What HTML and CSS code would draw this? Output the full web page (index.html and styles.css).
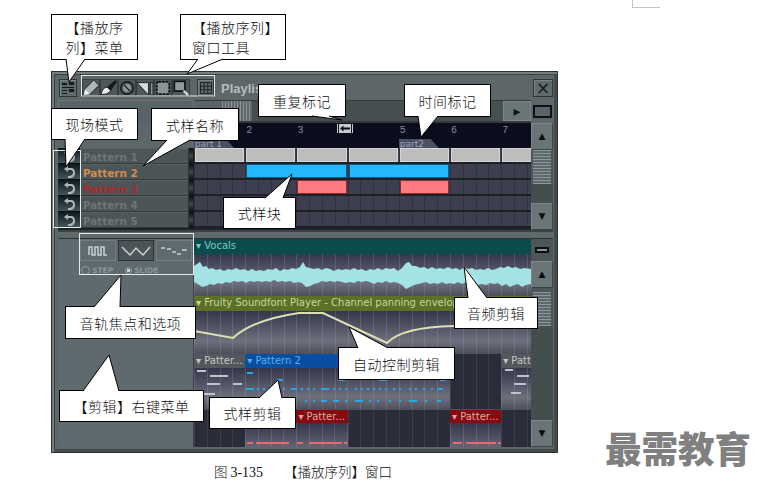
FILE: index.html
```html
<!DOCTYPE html>
<html lang="zh">
<head>
<meta charset="utf-8">
<title>播放序列窗口</title>
<link rel="stylesheet" href="styles.css">
</head>
<body>
<svg class="defs" width="0" height="0">
  <symbol id="undo" viewBox="0 0 18 14"><path d="M8 1 L4 4 L8 7 V5 H11 Q13 5 13 8 Q13 10 10 11 H8 V13 H11 Q15 12 15 8 Q15 3 11 3 H8 Z" fill="#a9b5b9"/></symbol>
</svg>
<main class="page">
  <i class="corner"></i>
  <section class="win">
    <header class="titlebar">
      <button class="btn menu-btn"><svg width="14" height="14" viewBox="0 0 14 14"><path d="M1 2h5v2H1zM8 1h5v3H8zM1 6h12v1H1zM1 9h5v1H1zM8 8h5v3H8zM1 12h5v1H1z" fill="#15191a"/></svg></button>
      <div class="tools">
        <span class="tool"><svg width="18" height="18" viewBox="0 0 18 18"><path d="M1 17 L2 10 L12 0 L18 6 L8 16Z" fill="#aeb6b8" stroke="#101314"/><path d="M1 17 L2 10 L8 16Z" fill="#f2f2f2"/></svg></span>
        <span class="tool"><svg width="18" height="18" viewBox="0 0 18 18"><path d="M0 16 Q2 8 7 8 L11 12 Q7 17 0 16Z" fill="#e8ecec" stroke="#0d1011"/><path d="M7 8 L16 0 L18 2 L11 12Z" fill="#15191a"/></svg></span>
        <span class="tool"><svg width="18" height="18" viewBox="0 0 18 18"><circle cx="9" cy="9" r="7" fill="none" stroke="#14181a" stroke-width="1.6"/><circle cx="9" cy="9" r="4.5" fill="#8e9799"/><path d="M5.5 5.5 L12.5 12.5" stroke="#14181a" stroke-width="1.5"/></svg></span>
        <span class="tool"><svg width="18" height="18" viewBox="0 0 18 18"><path d="M0 3 H13 V17 Z" fill="#d5dada" stroke="#14181a"/><path d="M15 3 H18 V17 H15Z" fill="#8e9799" stroke="#14181a"/></svg></span>
        <span class="tool"><svg width="18" height="18" viewBox="0 0 18 18"><rect x="2" y="2" width="14" height="14" rx="2" fill="#8a9395" stroke="#0f1213" stroke-width="2" stroke-dasharray="3 1"/></svg></span>
        <span class="tool"><svg width="18" height="18" viewBox="0 0 18 18"><rect x="1.5" y="1.5" width="12" height="11" fill="#8f9a9c" stroke="#10141a" stroke-width="2"/><path d="M12 12 L17 17" stroke="#d5dada" stroke-width="2.5"/></svg></span>
      </div>
      <button class="btn grid-btn"><svg width="12" height="12" viewBox="0 0 12 12"><path d="M.5.5h11v11H.5zM4.2.5v11M7.8.5v11M.5 4.2h11M.5 7.8h11" fill="none" stroke="#20262a"/></svg></button>
      <h1 class="title">Playlist</h1>
      <button class="btn close-btn">×</button>
    </header>

    <div class="navrow">
      <div class="nav-left"></div>
      <div class="nav-slider">
        <span class="nav-arrow"><i class="tri"></i></span>
        <span class="nav-thumb"></span>
        <span class="nav-fill"></span>
        <span class="nav-next">▸</span>
      </div>
      <div class="nav-tool"><i class="win-icon"></i></div>
    </div>

    <div class="top">
      <div class="names">
        <div class="name-spacer"></div>
        <div class="name-row"><span class="live"><svg width="18" height="14"><use href="#undo"/></svg></span><span class="pname">Pattern 1</span><i class="led"></i></div>
        <div class="name-row"><span class="live"><svg width="18" height="14"><use href="#undo"/></svg></span><span class="pname orange">Pattern 2</span><i class="led"></i></div>
        <div class="name-row"><span class="live"><svg width="18" height="14"><use href="#undo"/></svg></span><span class="pname red">Pattern 3</span><i class="led"></i></div>
        <div class="name-row"><span class="live"><svg width="18" height="14"><use href="#undo"/></svg></span><span class="pname">Pattern 4</span><i class="led"></i></div>
        <div class="name-row"><span class="live"><svg width="18" height="14"><use href="#undo"/></svg></span><span class="pname">Pattern 5</span><i class="led"></i></div>
      </div>
      <div class="seq">
        <div class="ruler">
          <span class="num"></span><span class="num">2</span><span class="num">3</span><span class="num"></span><span class="num">5</span><span class="num">6</span><span class="num">7</span>
          <span class="flag">part 1</span><span class="flag-gap-3"></span><span class="flag">part2</span>
          <span class="repeat-mark"><svg width="16" height="9" viewBox="0 0 16 9"><path d="M0 0h16v9H0z" fill="#c8ccd0"/><path d="M1 0h1v9H1zM14 0h1v9h-1z" fill="#0c0d1c"/><path d="M3 4.5L6.5 1.5V3.5H13V5.5H6.5V7.5Z" fill="#0c0d1c"/></svg></span>
        </div>
        <div class="seq-row"><b class="blk gray"></b><b class="blk gray"></b><b class="blk gray"></b><b class="blk gray"></b><b class="blk gray"></b><b class="blk gray"></b><b class="blk gray"></b></div>
        <div class="seq-row"><b class="blk blue at2"></b><b class="blk blue"></b></div>
        <div class="seq-row"><b class="blk pink at3"></b><b class="blk pink at5"></b></div>
        <div class="seq-row"></div>
        <div class="seq-row"></div>
      </div>
      <div class="scroll">
        <button class="arrow up">▲</button>
        <div class="grip"></div>
        <div class="well"></div>
        <button class="arrow down">▼</button>
      </div>
    </div>

    <div class="splitter"></div>

    <div class="bottom">
      <aside class="options">
        <div class="tabs">
          <span class="tab"><svg width="20" height="12" viewBox="0 0 20 12"><path d="M1 10V2H4V10H7V2H10V10H13V2H16V10H19" fill="none" stroke="#c9d1d2" stroke-width="1.5"/></svg></span>
          <span class="tab on"><svg width="30" height="12" viewBox="0 0 30 12"><path d="M1 2L9 10L15 3L22 10L29 2" fill="none" stroke="#c9d1d2" stroke-width="1.5"/></svg></span>
          <span class="tab"><svg width="28" height="10" viewBox="0 0 28 10"><path d="M1 2H5M7 3H11M12 6H16M17 8H21M22 4H27" fill="none" stroke="#c9d1d2" stroke-width="1.5"/></svg></span>
        </div>
        <div class="modes">
          <i class="radio"></i><span>STEP</span>
          <i class="radio dot"></i><span>SLIDE</span>
        </div>
      </aside>
      <div class="tracks">
        <div class="track audio">
          <div class="hdr teal">▾ Vocals</div>
          <div class="lane">
            <svg width="337" height="42" viewBox="0 0 337 42"><polygon fill="#a3e3e3" points="0,12 3,10 6,8 9,13 12,12 15,15 18,14 22,16 26,15 30,17 34,15 38,16 42,14 46,16 50,15 54,17 58,15 62,17 66,16 70,17 74,15 78,16 82,14 86,17 90,15 94,16 98,14 102,15 106,13 109,8 112,13 116,14 120,15 124,14 128,16 132,14 136,15 140,17 144,15 148,16 152,15 156,16 160,14 164,16 168,15 172,17 176,15 180,16 184,14 188,16 192,14 196,15 200,14 204,17 208,14 212,9 215,8 218,12 222,12 226,14 230,13 234,15 238,13 242,15 246,14 250,15 254,13 258,15 262,14 266,16 270,13 274,15 278,14 282,16 286,15 290,16 294,14 298,16 302,15 306,13 310,14 314,12 318,14 322,13 326,15 330,14 337,15 337,30 332,31 328,33 324,30 320,31 316,33 312,30 308,32 304,29 300,30 296,29 292,31 288,30 284,31 280,29 276,30 272,28 268,30 264,28 260,30 256,29 252,30 248,28 244,30 240,29 236,30 232,28 228,29 224,30 220,31 216,33 212,35 208,31 204,29 200,28 196,29 192,27 188,29 184,28 180,30 176,28 172,27 168,28 164,27 160,29 156,28 152,29 148,28 144,27 140,28 136,27 132,28 128,27 124,29 120,30 116,32 112,33 108,29 104,28 100,29 96,27 92,28 88,27 84,28 80,26 76,28 72,27 68,28 64,27 60,28 56,27 52,29 48,27 44,28 40,27 36,29 32,28 28,30 24,29 20,31 16,30 12,32 8,33 4,30 0,28"/></svg>
          </div>
        </div>
        <div class="track auto">
          <div class="hdr olive">▾ Fruity Soundfont Player - Channel panning envelop</div>
          <div class="lane">
            <svg width="337" height="43" viewBox="0 0 337 43"><path d="M0 20L39 27Q58 9 105 2H129L193 32Q208 16 260 15H337" fill="none" stroke="#dcdfb4" stroke-width="2"/></svg>
          </div>
        </div>
        <div class="track clips">
          <div class="clip c1"><div class="hdr gray-h">▾ Patter...</div><div class="lane"><svg width="51" height="42"><path d="M3 3h9M16 8h18M13 16h13M39 16h9M3 26h18" stroke="#c0c4c8" stroke-width="2"/></svg></div></div>
          <div class="clip c4"><div class="hdr blue-h">▾ Pattern 2</div><div class="lane"><svg width="204" height="42"><path d="M2 5h6M32 12h6M94 12h6M134 12h8M195 12h6M1 21h8M12 21h2M18 21h2M24 21h2M32 21h2M38 21h2M46 21h6M56 21h2M62 21h2M68 21h2M76 21h8M88 21h2M94 21h2M100 21h2M110 21h2M116 21h2M122 21h2M128 21h2M134 21h2M140 21h2M148 21h2M154 21h2M164 21h2M170 21h2M178 21h2M186 21h2M192 21h6M36 33h2M44 33h8M60 33h2M68 33h2M76 33h6M88 33h6M100 33h2M110 33h8M124 33h2M132 33h2M144 33h2M154 33h2M164 33h8M180 33h2M192 33h4" stroke="#27a7e8" stroke-width="2"/></svg></div></div>
          <div class="clip c7"><div class="hdr gray-h">▾ Patt</div><div class="lane"><svg width="29" height="42"><path d="M4 2h8M16 8h12M13 16h12M10 25h10" stroke="#c0c4c8" stroke-width="2"/></svg></div></div>
        </div>
        <div class="track clips last">
          <div class="clip c2b"><div class="hdr red-h"></div><div class="lane"><svg width="51" height="24"><path d="M2 20h6M11 20h33" stroke="#e8686c" stroke-width="2"/></svg></div></div>
          <div class="clip c3b"><div class="hdr red-h">▾ Patter...</div><div class="lane"><svg width="51" height="24"><path d="M1 20h6M13 20h33M48 20h3" stroke="#e8686c" stroke-width="2"/></svg></div></div>
          <div class="clip c6b"><div class="hdr red-h">▾ Patter...</div><div class="lane"><svg width="51" height="24"><path d="M3 20h9M16 20h30M48 20h3" stroke="#e8686c" stroke-width="2"/></svg></div></div>
        </div>
      </div>
      <div class="scroll lower">
        <button class="arrow mini"><i class="bar-icon"></i></button>
        <button class="arrow up">▲</button>
        <div class="grip"></div>
        <div class="well"></div>
        <button class="arrow down">▼</button>
      </div>
    </div>
  </section>

  <p class="caption"><span class="fig">图</span> <span class="num-t">3-135</span><span class="cap-gap"></span>【播放序列】窗口</p>
  <div class="watermark">最需教育</div>

  <div class="note n1"><div>【播放序<br>列】菜单</div></div>
  <div class="note n2"><div>【播放序列】<br>窗口工具</div></div>
  <div class="note n3">重复标记</div>
  <div class="note n4">时间标记</div>
  <div class="note n5">现场模式</div>
  <div class="note n6">式样名称</div>
  <div class="note n7">式样块</div>
  <div class="note n8">音轨焦点和选项</div>
  <div class="note n9">【剪辑】右键菜单</div>
  <div class="note n10">式样剪辑</div>
  <div class="note n11">音频剪辑</div>
  <div class="note n12">自动控制剪辑</div>

  <svg class="overlay" width="757" height="488" viewBox="0 0 757 488">
    <g class="frames">
      <rect x="81.5" y="75.5" width="133" height="20.5"/>
      <rect x="53.5" y="150.5" width="27" height="77"/>
      <rect x="79.5" y="233.5" width="114" height="41"/>
    </g>
    <g class="tails">
      <path d="M66 59L69 82L85 59"/>
      <path d="M198 59L187 74L223 59"/>
      <path d="M312 116L342 120L329 116"/>
      <path d="M418 116L421 137L438 116"/>
      <path d="M65 139L66 167L85 139"/>
      <path d="M167 140L143 166L190 140"/>
      <path d="M265 198L292 174L283 198"/>
      <path d="M94 307L121 275L120 307"/>
      <path d="M83 391L109 355L119 391"/>
      <path d="M259 398L278 380L282 398"/>
      <path d="M468 298L464 267L487 298"/>
      <path d="M358 348L349 327L388 348"/>
    </g>
  </svg>
</main>
</body>
</html>
```
FILE: styles.css
```css
* { box-sizing: border-box; }
html, body { margin: 0; background: #fff; }
.defs { position: absolute; }
.page {
  position: relative;
  width: 757px;
  height: 488px;
  padding: 71px 0 0 51px;
  overflow: hidden;
  font-family: "Noto Sans CJK SC", "Liberation Sans", sans-serif;
}
.corner {
  position: absolute;
  left: 632px;
  top: 0;
  width: 28px;
  height: 8px;
  border-left: 1px solid #c4c4c4;
  border-bottom: 1px solid #c4c4c4;
}
button { padding: 0; margin: 0; font: inherit; }

/* window */
.win {
  width: 507px;
  height: 382px;
  padding: 7px 4px 5px 6px;
  display: flex;
  flex-direction: column;
  background: #5d6769;
  border: 1px solid #2c3132;
  box-shadow: inset 2px 2px 0 #757e80, inset -3px -3px 0 #444b4c, inset 3px 3px 0 #3a4041;
}
.btn {
  background: #5f6a6c;
  border: 1px solid #2f3536;
  box-shadow: inset 1px 1px 0 #7b8587;
  display: flex;
  align-items: center;
  justify-content: center;
}
.titlebar {
  height: 18px;
  flex: none;
  display: flex;
  align-items: center;
  font-family: "Liberation Sans", sans-serif;
}
.menu-btn { width: 18px; height: 18px; margin-left: 1px; }
.tools { display: flex; margin-left: 5px; }
.tool {
  width: 18px;
  height: 18px;
  background: #4e585a;
  border: 1px solid #383e3f;
  display: flex;
  align-items: center;
  justify-content: center;
  overflow: hidden;
}
.grid-btn { width: 17px; height: 18px; margin-left: 7px; }
.title {
  margin: 0 0 0 7px;
  flex: 1;
  font-size: 13px;
  font-weight: 700;
  color: #b4bcbe;
}
.close-btn { width: 20px; height: 18px; color: #171b1c; font-size: 17px; font-family: "DejaVu Sans", sans-serif; line-height: 1; }

.navrow {
  display: grid;
  grid-template-columns: 136px 337px 22px;
  height: 23px;
  margin-top: 3px;
  flex: none;
}
.nav-left { background: #596365; border: 1px solid #6b7577; border-bottom: 0; }
.nav-slider { display: flex; align-items: stretch; background: #464f50; border-top: 1px solid #343a3b; border-bottom: 2px solid #343a3b; }
.nav-arrow { width: 28px; background: #5b6567; display: flex; justify-content: center; padding-top: 5px; }
.tri { width: 0; height: 0; border: 3px solid transparent; border-bottom: 4px solid #111; }
.nav-thumb { width: 30px; background: repeating-linear-gradient(90deg, #8a9496 0 1px, #5f696b 1px 3px); }
.nav-fill { flex: 1; }
.nav-next { width: 28px; background: #6a7577; border: 1px solid #7e888a; color: #0f1213; font-size: 14px; text-align: center; line-height: 18px; font-family: "DejaVu Sans", sans-serif; }
.nav-tool { display: flex; align-items: center; justify-content: center; background: #5d6769; }
.win-icon { width: 19px; height: 13px; border: 2px solid #0f1213; background: #59656a; }

.top {
  display: grid;
  grid-template-columns: 136px 337px 22px;
  height: 107px;
  flex: none;
}
.names { display: flex; flex-direction: column; background: #1c2224; }
.name-spacer { height: 25px; background: #5d6769; flex: none; }
.name-row { height: 16px; display: flex; flex: none; }
.live {
  width: 22px;
  background: linear-gradient(#10181b, #43545a);
  border-bottom: 1px solid #0b0e0f;
  display: flex;
  align-items: center;
  justify-content: center;
  flex: none;
}
.pname {
  flex: 1;
  padding: 1px 0 0 3px;
  background: #4c5658;
  border-bottom: 1px solid #333a3b;
  border-top: 1px solid #596365;
  font: 700 10.4px/14px "DejaVu Sans", sans-serif;
  color: #6e7577;
}
.pname.orange { color: #d48b4f; }
.pname.red { color: #a82a2e; }
.led { width: 5px; background: linear-gradient(#0b0e0f, #3d4a4d 50%, #0b0e0f); border-left: 1px solid #333; flex: none; margin-right: 1px; }

.seq { display: flex; flex-direction: column; background: #21232e; overflow: hidden; }
.ruler {
  position: relative;
  height: 25px;
  flex: none;
  background: #0c0d1c;
  display: grid;
  grid-template-columns: repeat(7, 51.2px);
  grid-template-rows: 16px 9px;
  font: 10px/16px "Liberation Mono", monospace;
  color: #858b9a;
}
.num { padding-left: 1px; }
.flag {
  background: #4b4f63;
  color: #a0a4b4;
  font: 9px/10px "DejaVu Sans", sans-serif;
  padding-left: 1px;
  width: 40px;
  white-space: nowrap;
  clip-path: polygon(0 0, 80% 0, 100% 100%, 0 100%);
}
.flag-gap-3 { grid-column: span 3; }
.repeat-mark { position: absolute; left: 143px; top: 1px; line-height: 0; }
.seq-row {
  height: 16px;
  flex: none;
  display: grid;
  grid-template-columns: repeat(7, 51.2px);
  border-bottom: 2px solid #1e2029;
  background:
    repeating-linear-gradient(90deg, #303240 0 1px, transparent 1px 12.8px),
    #3d3f4e;
}
.blk { margin: 0 1px 0 1px; border: 1px solid transparent; }
.blk.gray { background: #bdbdbd; border-color: #d6d6d6; }
.blk.blue { background: #25b8ff; grid-column: span 2; border-color: #0a5a86; }
.blk.blue.at2 { grid-column: 2 / span 2; }
.blk.pink { background: #ff7b7f; border-color: #8a2a2c; }
.blk.at3 { grid-column: 3; }
.blk.at5 { grid-column: 5; }

.scroll { display: flex; flex-direction: column; background: #4d5759; }
.arrow {
  width: 22px;
  height: 27px;
  flex: none;
  background: #6a7577;
  border: 1px solid #7e888a;
  border-right-color: #3c4344;
  border-bottom-color: #3c4344;
  color: #0c0f10;
  font: 9px/1 "DejaVu Sans", sans-serif;
}
.grip {
  height: 34px;
  flex: none;
  margin: 0 2px;
  background: repeating-linear-gradient(#8d9799 0 1px, #5f696b 1px 3px);
}
.well { flex: 1; background: #454e4f; }
.lower .grip { margin-top: 4px; }
.lower .arrow.mini { height: 22px; background: #4d5759; border: 0; display: flex; align-items: center; justify-content: center; }
.bar-icon { width: 14px; height: 6px; border: 2px solid #0c0f10; background: #8a9496; }

.splitter {
  height: 9px;
  flex: none;
  background: #5f696b;
  border-top: 2px solid #3b4243;
  border-bottom: 1px solid #2c3132;
}

.bottom {
  display: grid;
  grid-template-columns: 136px 337px 22px;
  height: 208px;
  flex: none;
}
.options { background: #5f6a6e; padding: 1px 0 0 22px; display: flex; flex-direction: column; border-right: 1px solid #3b4243; }
.tabs { display: flex; height: 21px; gap: 2px; }
.tab {
  width: 36px;
  background: #5f6a6e;
  border: 1px solid #727d80;
  display: flex;
  align-items: center;
  justify-content: center;
}
.tab.on { background: #4b5557; border-color: #2e3435; }
.modes {
  display: flex;
  align-items: center;
  gap: 2px;
  height: 13px;
  margin-top: 3px;
  font: 700 7.5px/13px "DejaVu Sans", sans-serif;
  color: #8c9698;
}
.radio { width: 9px; height: 9px; border: 1px solid #95a0a2; border-radius: 50%; margin-left: 1px; }
.radio.dot { width: 7px; height: 7px; margin-left: 10px; background: radial-gradient(circle, #c8d0d2 0 1.5px, transparent 2px); }

.tracks { display: flex; flex-direction: column; background: #2e3140; overflow: hidden; }
.track { flex: none; }
.hdr {
  height: 15px;
  padding-left: 2px;
  font: 10px/14px "DejaVu Sans", sans-serif;
  white-space: nowrap;
  overflow: hidden;
}
.teal { background: #0b4b4b; color: #74c9c2; }
.olive { background: #5c7028; color: #c6d79d; }
.gray-h { background: #55585b; color: #c6c8cc; height: 14px; }
.blue-h { background: #0a4ea2; color: #4fb3ec; height: 14px; }
.red-h { background: #850b10; color: #eea0a3; height: 13px; }
.lane {
  background:
    repeating-linear-gradient(90deg, rgba(190,195,210,.18) 0 1px, transparent 1px 12.8px),
    linear-gradient(#34364a, #6d6f7d 70%, #4c4e5c);
  line-height: 0;
}
.audio .lane { height: 42px; }
.auto .lane { height: 43px; }
.clips {
  display: grid;
  grid-template-columns: repeat(7, 51.2px);
  height: 56px;
  background:
    repeating-linear-gradient(90deg, #3c3e4e 0 1px, transparent 1px 12.8px),
    #2a2c3a;
  border-bottom: 1px solid #4d5058;
}
.clips.last { height: 37px; border-bottom: 0; }
.clip { min-width: 0; overflow: hidden; }
.clip .lane { height: 42px; }
.clip .hdr { white-space: nowrap; }
.c1 { grid-column: 1; }
.c4 { grid-column: 2 / span 4; }
.c7 { grid-column: 7; }
.c2b { grid-column: 2; }
.c3b { grid-column: 3; }
.c6b { grid-column: 6; }

/* caption and mark */
.caption {
  width: 507px;
  margin: 9px 0 0;
  padding-right: 3px;
  text-align: center;
  font-size: 13.5px;
  font-weight: 300;
  line-height: 18px;
  color: #111;
}
.num-t { font-family: "Liberation Serif", serif; font-size: 14px; }
.cap-gap { display: inline-block; width: 21px; }
.watermark {
  position: absolute;
  left: 605px;
  top: 423px;
  font-size: 36.5px;
  font-weight: 900;
  line-height: 50px;
  color: #808080;
  white-space: nowrap;
}

/* callouts */
.note {
  position: absolute;
  background: #fff;
  border: 1px solid #000;
  color: #111;
  font-size: 14px;
  line-height: 20px;
  letter-spacing: .5px;
  font-weight: 300;
  display: flex;
  align-items: center;
  justify-content: center;
  text-align: center;
  white-space: nowrap;
}
.n1 { left: 51px; top: 14px; width: 87px; height: 46px; }
.n2 { left: 180px; top: 14px; width: 106px; height: 46px; justify-content: flex-start; padding-left: 11px; text-align: left; }
.n3 { left: 258px; top: 84px; width: 88px; height: 33px; }
.n4 { left: 404px; top: 84px; width: 87px; height: 33px; }
.n5 { left: 51px; top: 108px; width: 87px; height: 32px; }
.n6 { left: 151px; top: 108px; width: 88px; height: 33px; }
.n7 { left: 223px; top: 197px; width: 73px; height: 32px; }
.n8 { left: 65px; top: 306px; width: 131px; height: 33px; }
.n9 { left: 59px; top: 390px; width: 145px; height: 32px; }
.n10 { left: 209px; top: 397px; width: 87px; height: 32px; }
.n11 { left: 454px; top: 297px; width: 84px; height: 32px; }
.n12 { left: 338px; top: 347px; width: 117px; height: 33px; }

.overlay { position: absolute; left: 0; top: 0; pointer-events: none; }
.frames rect { fill: none; stroke: #e6e9ea; stroke-width: 1; }
.tails path { fill: #fff; stroke: #000; stroke-width: 1; }
```
